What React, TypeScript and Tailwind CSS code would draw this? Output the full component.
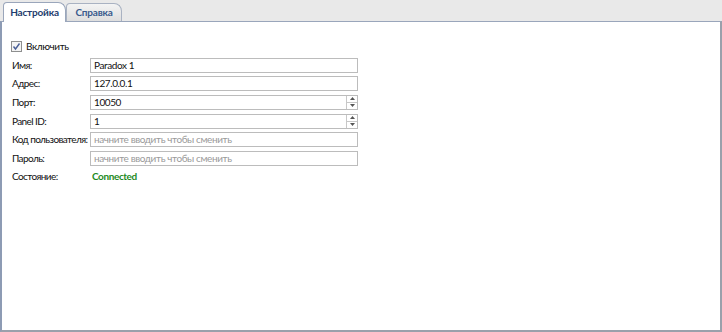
import React from 'react';

const rows = [
    { label: 'Имя:', value: 'Paradox 1' },
    { label: 'Адрес:', value: '127.0.0.1' },
    { label: 'Порт:', value: '10050', spin: true },
    { label: 'Panel ID:', value: '1', spin: true },
    { label: 'Код пользователя:', placeholder: 'начните вводить чтобы сменить' },
    { label: 'Пароль:', placeholder: 'начните вводить чтобы сменить' },
];

function Spinner() {
    return (
        <div className="flex flex-col w-[11px] h-full border-l border-[#c8c8c8]">
            <div className="flex-1 flex items-center justify-center border-b border-[#c8c8c8]">
                <svg width="5" height="3" viewBox="0 0 5 3"><path d="M0 3 L2.5 0 L5 3 Z" fill="#555" /></svg>
            </div>
            <div className="flex-1 flex items-center justify-center">
                <svg width="5" height="3" viewBox="0 0 5 3"><path d="M0 0 L2.5 3 L5 0 Z" fill="#555" /></svg>
            </div>
        </div>
    );
}

export default function App() {
    return (
        <div className="w-[722px] h-[332px] bg-[#e9e9e9] flex flex-col text-[10px] tracking-[-0.4px] text-[#111] font-['Lato',sans-serif]">
            {/* Tabs */}
            <div className="flex items-end h-[21px] pl-[3px]">
                <div className="relative z-10 h-[20px] w-[63px] bg-white border border-b-0 border-[#9aa6bb] rounded-tl-[4px] rounded-tr-[8px] flex items-center justify-center -mb-px">
                    <span className="font-bold text-[#1e3c6e] tracking-[-0.2px]">Настройка</span>
                </div>
                <div className="h-[18px] w-[56px] bg-gradient-to-b from-[#f4f4f4] to-[#dedede] border border-b-0 border-[#a9b2c2] rounded-tl-[4px] rounded-tr-[8px] flex items-center justify-center">
                    <span className="font-bold text-[#3a5a8c] tracking-[-0.2px]">Справка</span>
                </div>
            </div>

            {/* Panel */}
            <div className="flex-1 bg-white border-t border-[#9aa6bb] border-l-2 border-l-[#8d9bb4] border-r-2 border-r-[#9aa0ab] border-b-2 border-b-[#9aa0ab] pl-[9px] pt-[17px]">
                <div className="flex items-center gap-[4px] h-[14px] mb-[3px]">
                    <div className="w-[11px] h-[11px] border border-[#8e8f8f] bg-[#f4f4f4] flex items-center justify-center">
                        <svg width="9" height="9" viewBox="0 0 9 9">
                            <path d="M1.5 4.5 L3.5 7 L7.5 1.5" fill="none" stroke="#4a5f97" strokeWidth="1.4" />
                        </svg>
                    </div>
                    <span>Включить</span>
                </div>

                {rows.map((r) => (
                    <div key={r.label} className="flex items-center h-[18.6px]">
                        <div className="w-[79px] shrink-0 whitespace-nowrap pl-[1px] tracking-[-0.6px]">{r.label}</div>
                        <div className="w-[268px] h-[15px] border border-[#bcbcbc] flex items-center">
                            <div className={`flex-1 pl-[3px] whitespace-nowrap ${r.placeholder ? 'text-[#9a9a9a]' : ''}`}>
                                {r.value ?? r.placeholder}
                            </div>
                            {r.spin && <Spinner />}
                        </div>
                    </div>
                ))}

                <div className="flex items-center h-[18.6px]">
                    <div className="w-[79px] shrink-0 pl-[1px] tracking-[-0.6px]">Состояние:</div>
                    <div className="pl-[2px] font-bold text-[#1e8a1e]">Connected</div>
                </div>
            </div>
        </div>
    );
}
